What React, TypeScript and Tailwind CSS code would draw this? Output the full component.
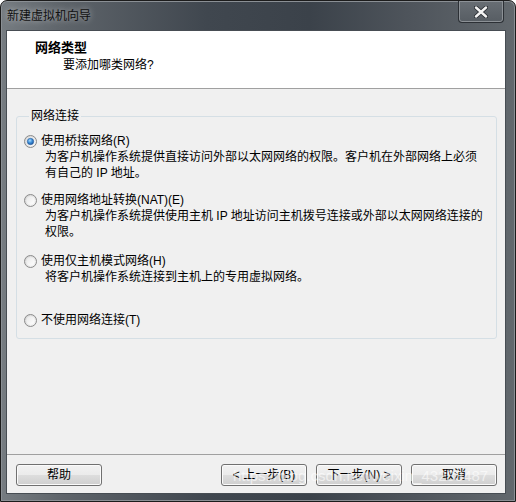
import React from "react";

function Radio({ checked }: { checked?: boolean }) {
  return (
    <svg width="13" height="13" viewBox="0 0 13 13" className="shrink-0">
      <defs>
        <linearGradient id="rg1" x1="0" y1="0" x2="1" y2="1">
          <stop offset="0" stopColor="#d2d2d2" />
          <stop offset="1" stopColor="#f8f8f8" />
        </linearGradient>
        <linearGradient id="rg2" x1="0" y1="0" x2="1" y2="1">
          <stop offset="0" stopColor="#e8e8e8" />
          <stop offset="1" stopColor="#ffffff" />
        </linearGradient>
        <radialGradient id="rg3" cx="0.4" cy="0.35" r="0.7">
          <stop offset="0" stopColor="#a9dbff" />
          <stop offset="0.5" stopColor="#3c8ed8" />
          <stop offset="1" stopColor="#1a4f98" />
        </radialGradient>
      </defs>
      <circle cx="6.5" cy="6.5" r="6" fill="url(#rg1)" stroke="#8a8a8a" strokeWidth="1" />
      <circle cx="6.5" cy="6.5" r="4.2" fill="url(#rg2)" />
      {checked && <circle cx="6.5" cy="6.5" r="3.2" fill="url(#rg3)" stroke="#2a5e9c" strokeWidth="0.6" />}
    </svg>
  );
}

function Btn({ children }: { children: React.ReactNode }) {
  return (
    <button className="w-[86px] h-[22px] rounded-[3px] border border-[#707070] bg-[linear-gradient(to_bottom,#f2f2f2_0%,#ebebeb_50%,#dddddd_51%,#cfcfcf_100%)] shadow-[inset_0_0_0_1px_#fbfbfb] text-[12px] leading-[20px] text-black">
      {children}
    </button>
  );
}

export default function App() {
  return (
    <div className="w-[516px] h-[502px] bg-white font-['Liberation_Sans','Noto_Sans_CJK_SC',sans-serif] text-[12px] text-black">
      <div className="relative w-full h-full flex flex-col rounded-t-[7px] border border-[#1c1c1c] bg-[linear-gradient(to_right,#767c81_0%,#5e646a_12%,#40474f_40%,#3b424a_60%,#4f555c_80%,#62686d_100%)] shadow-[inset_0_0_0_1px_#8a8f94]">
        {/* title bar */}
        <div className="h-[30px] flex items-start pl-[6px] pt-[7px]">
          <span className="text-[12px] leading-[16px] text-[#111] [text-shadow:0_0_6px_rgba(255,255,255,0.6)]">新建虚拟机向导</span>
        </div>
        <div className="absolute top-0 right-[11px] w-[46px] h-[22px] rounded-b-[4px] border border-t-0 border-[#2c3035] bg-[linear-gradient(to_bottom,#686e74,#575d63)] shadow-[inset_0_0_0_1px_#8c9196] flex items-center justify-center">
          <svg width="14" height="12" viewBox="0 0 14 12">
            <path d="M2 1.5 L12 10.5 M12 1.5 L2 10.5" stroke="#2a2e33" strokeWidth="4.2" strokeLinecap="round" />
            <path d="M2 1.5 L12 10.5 M12 1.5 L2 10.5" stroke="#f4f4f4" strokeWidth="2.4" strokeLinecap="round" />
          </svg>
        </div>

        {/* client area */}
        <div className="ml-[6px] mr-[10px] mb-[8px] flex-1 flex flex-col bg-[#f0f0f0] border-0 outline outline-1 outline-[#474d53]">
          {/* header */}
          <div className="h-[58px] bg-white border-b border-[#a0a0a0] pt-[9px]">
            <div className="pl-[28px] text-[13px] font-bold leading-[16px]">网络类型</div>
            <div className="pl-[56px] leading-[16px] mt-[1px]">要添加哪类网络?</div>
          </div>

          {/* content */}
          <fieldset className="mt-[19px] ml-[9px] mr-[8px] rounded-[3px] border border-[#d5dfe5] pl-[7px] pb-[10px] pt-[9px]">
            <legend className="ml-[5px] px-[2px] leading-[16px]">网络连接</legend>

            <div className="flex items-center gap-[4px] h-[16px]">
              <Radio checked />
              <span className="leading-[16px]">使用桥接网络(R)</span>
            </div>
            <div className="pl-[21px] leading-[16px]">
              <div>为客户机操作系统提供直接访问外部以太网网络的权限。客户机在外部网络上必须</div>
              <div>有自己的 IP 地址。</div>
            </div>

            <div className="flex items-center gap-[4px] h-[16px] mt-[11px]">
              <Radio />
              <span className="leading-[16px]">使用网络地址转换(NAT)(E)</span>
            </div>
            <div className="pl-[21px] leading-[16px]">
              <div>为客户机操作系统提供使用主机 IP 地址访问主机拨号连接或外部以太网网络连接的</div>
              <div>权限。</div>
            </div>

            <div className="flex items-center gap-[4px] h-[16px] mt-[13px]">
              <Radio />
              <span className="leading-[16px]">使用仅主机模式网络(H)</span>
            </div>
            <div className="pl-[21px] leading-[16px]">
              <div>将客户机操作系统连接到主机上的专用虚拟网络。</div>
            </div>

            <div className="flex items-center gap-[4px] h-[16px] mt-[27px]">
              <Radio />
              <span className="leading-[16px]">不使用网络连接(T)</span>
            </div>
          </fieldset>

          <div className="flex-1" />

          {/* footer */}
          <div className="border-t border-[#a0a0a0] pt-[9px] pb-[7px] pl-[9px] pr-[8px] flex items-center">
            <Btn>帮助</Btn>
            <div className="flex-1" />
            <div className="flex gap-[9px]">
              <Btn>&lt; 上一步(B)</Btn>
              <Btn>下一步(N) &gt;</Btn>
              <Btn>取消</Btn>
            </div>
          </div>
        </div>

        {/* watermark */}
        <div className="absolute left-[232px] top-[466px] text-[15px] leading-[18px] text-white/60 font-['Liberation_Sans',sans-serif] pointer-events-none whitespace-nowrap">
          https://blog.csdn.net/weixin_43283487
        </div>
      </div>
    </div>
  );
}
